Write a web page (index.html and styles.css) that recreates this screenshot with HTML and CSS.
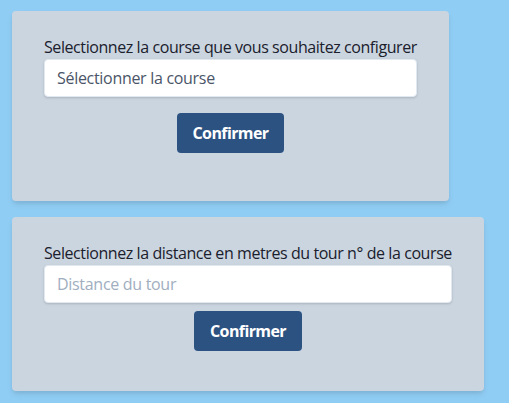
FILE: index.html
```html
<!DOCTYPE html>
<html lang="fr">
<head>
<meta charset="utf-8">
<title>Configuration de la course</title>
<link rel="stylesheet" href="styles.css">
</head>
<body>
<main class="page">
  <form class="card">
    <label class="label" for="course">Selectionnez la course que vous souhaitez configurer</label>
    <div class="field-wrap">
      <select class="field field-select" id="course">
        <option>Sélectionner la course</option>
      </select>
    </div>
    <div class="actions actions-lg">
      <button class="btn" type="button">Confirmer</button>
    </div>
  </form>
  <form class="card">
    <label class="label" for="distance">Selectionnez la distance en metres du tour n° de la course</label>
    <input class="field" id="distance" type="text" placeholder="Distance du tour">
    <div class="actions actions-sm">
      <button class="btn" type="button">Confirmer</button>
    </div>
  </form>
</main>
</body>
</html>
```
FILE: styles.css
```css
html, body {
  margin: 0;
  padding: 0;
}
body {
  background: #90cdf4;
  font-family: "Open Sans", "Noto Sans", sans-serif;
  font-size: 16px;
  letter-spacing: -0.42px;
  min-height: 403px;
}
.page {
  padding: 11px 12px;
  display: flex;
  flex-direction: column;
  align-items: flex-start;
  gap: 16px;
}
.card {
  margin: 0;
  background: #cbd5e0;
  border-radius: 4px;
  box-shadow: 0 4px 6px -1px rgba(0, 0, 0, 0.1), 0 2px 4px -1px rgba(0, 0, 0, 0.06);
  padding: 24px 32px 32px;
}
.label {
  display: block;
  line-height: 24px;
  color: #1a202c;
  white-space: nowrap;
}
.field-wrap {
  margin-bottom: 16px;
}
.field {
  display: block;
  width: 100%;
  box-sizing: border-box;
  height: 38px;
  margin: 0;
  padding: 8px 12px;
  border: 1px solid #e2e8f0;
  border-radius: 4px;
  background: #fff;
  box-shadow: 0 1px 3px 0 rgba(0, 0, 0, 0.1), 0 1px 2px 0 rgba(0, 0, 0, 0.06);
  font-family: inherit;
  font-size: 16px;
  letter-spacing: -0.3px;
  line-height: 20px;
  color: #4a5568;
  outline: none;
}
.field-select {
  appearance: none;
  -webkit-appearance: none;
}
.field::placeholder {
  color: #a0aec0;
  opacity: 1;
}
.actions {
  display: flex;
  justify-content: center;
}
.actions-lg {
  margin-top: 0;
  margin-bottom: 16px;
}
.actions-sm {
  margin-top: 8px;
  margin-bottom: 8px;
}
.btn {
  background: #2c5282;
  color: #fff;
  font-family: inherit;
  font-size: 16px;
  font-weight: 700;
  letter-spacing: -0.62px;
  line-height: 24px;
  padding: 8px 16px;
  border: none;
  border-radius: 4px;
  cursor: pointer;
}
```
